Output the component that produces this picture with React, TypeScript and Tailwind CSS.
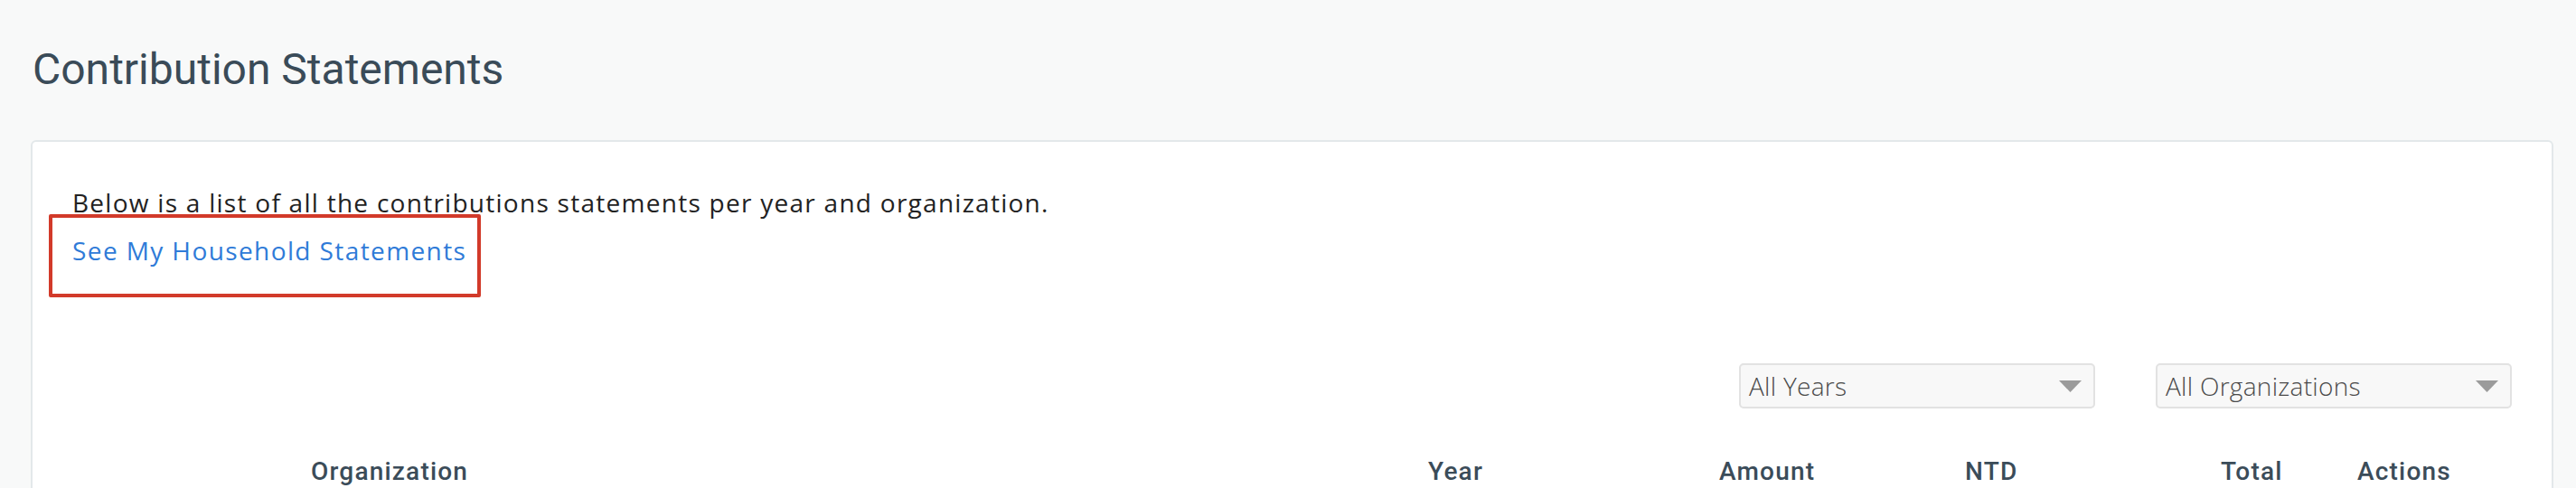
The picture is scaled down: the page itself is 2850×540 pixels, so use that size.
import React from 'react';

const SelectBox: React.FC<{ label: string }> = ({ label }) => {
  return (
    <div className="relative flex h-[50px] w-[394px] items-center rounded-[5px] border-2 border-[#e2e2e2] bg-[#f8f8f8] pl-[9px] pr-[13px]">
      <span className="flex-1 font-['Open_Sans',sans-serif] text-[28px] font-light leading-[40px] tracking-[0.3px] text-[#4a4a4a]">{label}</span>
      <svg width="25" height="13" viewBox="0 0 25 13" className="shrink-0">
        <path d="M0 0 H25 L12.5 13 Z" fill="#9b9b9b" />
      </svg>
    </div>
  );
};

const headers = [
  { label: 'Organization', cls: 'w-[1500px] pl-[264px]' },
  { label: 'Year', cls: 'w-[322px]' },
  { label: 'Amount', cls: 'w-[272px]' },
  { label: 'NTD', cls: 'w-[283px]' },
  { label: 'Total', cls: 'w-[151px]' },
  { label: 'Actions', cls: 'flex-1' },
];

const App: React.FC = () => {
  return (
    <div className="h-[540px] w-[2850px] overflow-hidden bg-[#f8f9f9] px-[34px] pt-[49px]">
      <h1 className="pl-[2px] font-['Roboto',sans-serif] text-[48px] font-normal leading-[56px] text-[#3a4b58]">
        Contribution Statements
      </h1>

      <div className="mt-[50px] h-[500px] w-[2791px] rounded-[6px] border-2 border-[#e3e8ea] bg-white px-[44px] pt-[47px]">
        <p className="font-['Open_Sans',sans-serif] text-[28px] leading-[40px] tracking-[1.27px] text-[#222]">
          Below is a list of all the contributions statements per year and organization.
        </p>
        <div className="relative mt-[13px]">
          <a href="#" className="font-['Open_Sans',sans-serif] text-[28px] leading-[40px] tracking-[1.4px] text-[#2f7bd8]">
            See My Household Statements
          </a>
          {/* highlight annotation */}
          <div className="pointer-events-none absolute left-[-26px] top-[-20px] h-[92px] w-[478px] rounded-[2px] border-4 border-[#d23a2a]" />
        </div>

        <div className="mt-[105px] flex justify-end gap-[67px]">
          <SelectBox label="All Years" />
          <SelectBox label="All Organizations" />
        </div>

        <div className="mt-[50px] flex font-['Roboto',sans-serif] text-[28px] font-medium leading-[40px] tracking-[1.2px] text-[#3b4c59]">
          {headers.map((h) => (
            <div key={h.label} className={h.cls}>{h.label}</div>
          ))}
        </div>
      </div>
    </div>
  );
};

export default App;
